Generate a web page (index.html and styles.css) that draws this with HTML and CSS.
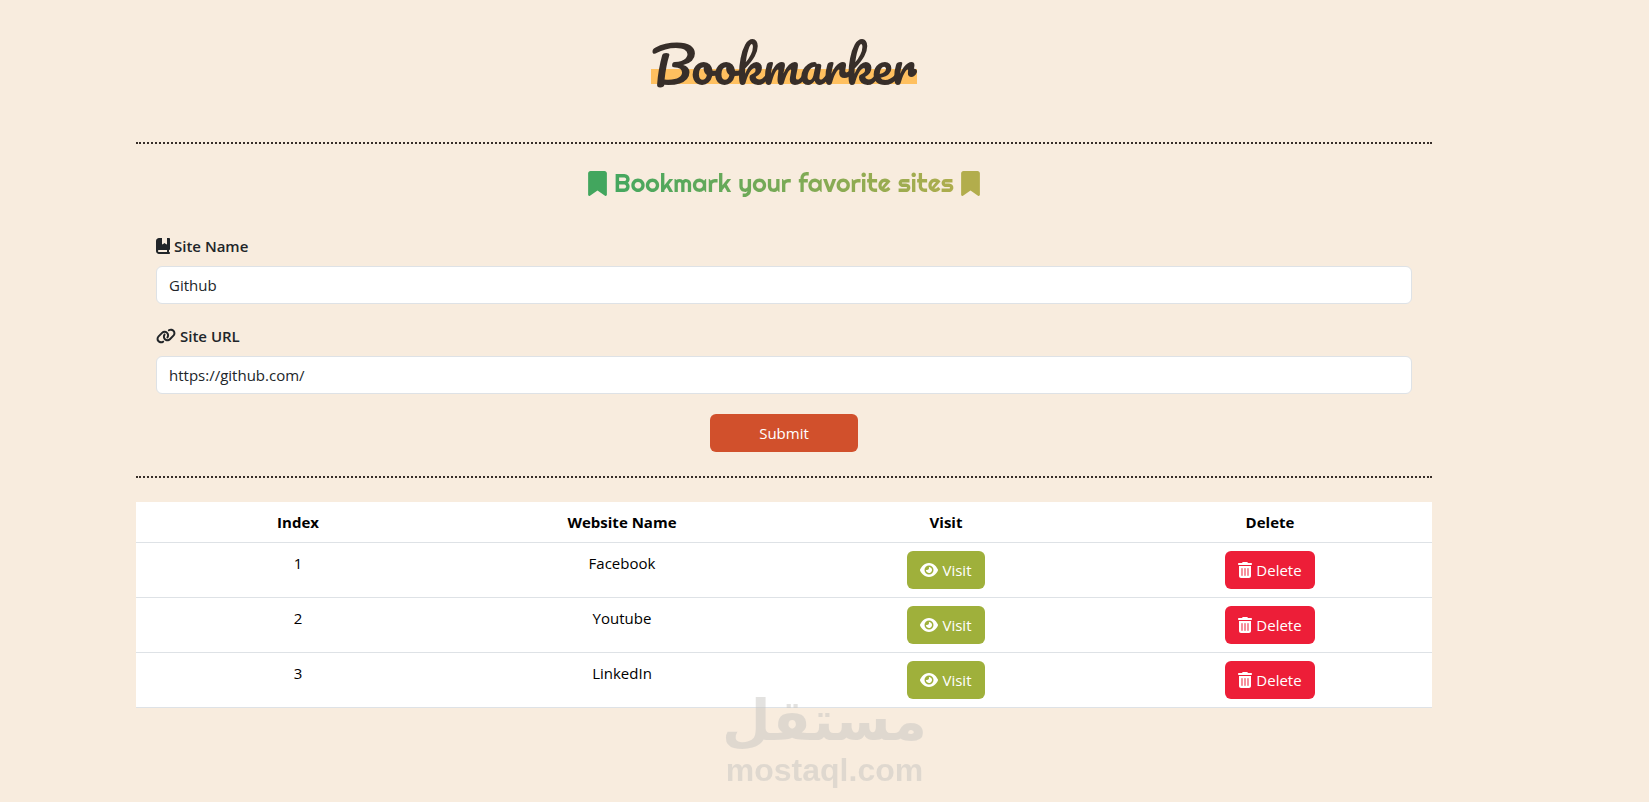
FILE: index.html
```html
<!DOCTYPE html>
<html lang="en">
<head>
<meta charset="utf-8">
<title>Bookmarker</title>
<link rel="stylesheet" href="styles.css">
</head>
<body>
<svg class="sprite" aria-hidden="true">
  <symbol id="bookmark" viewBox="0 0 384 512"><path d="M0 48V487.700C0 501.100 10.900 512 24.300 512c5 0 9.900-1.500 14-4.400L192 400 345.700 507.600c4.100 2.900 9 4.400 14 4.400c13.400 0 24.300-10.900 24.300-24.300V48c0-26.500-21.500-48-48-48H48C21.500 0 0 21.500 0 48z"/></symbol>
  <symbol id="book" viewBox="0 0 448 512"><path d="M0 96C0 43 43 0 96 0h96v190.700c0 13.400 15.500 20.900 26 12.500L272 160l54 43.200c10.500 8.400 26 .900 26-12.500V0h64c17.700 0 32 14.300 32 32v320c0 17.700-14.300 32-32 32v64c17.700 0 32 14.300 32 32s-14.300 32-32 32H96c-53 0-96-43-96-96V96zm64 320c0 17.700 14.300 32 32 32h256v-64H96c-17.700 0-32 14.300-32 32z"/></symbol>
  <symbol id="link" viewBox="0 0 640 512"><path d="M579.800 267.700c56.500-56.500 56.500-148 0-204.500c-50-50-128.800-56.500-186.300-15.400l-1.600 1.100c-14.400 10.300-17.700 30.300-7.400 44.600s30.300 17.700 44.600 7.400l1.600-1.100c32.100-22.900 76-19.300 103.800 8.600c31.500 31.500 31.500 82.500 0 114L422.300 334.800c-31.500 31.500-82.500 31.500-114 0c-27.900-27.900-31.500-71.800-8.600-103.800l1.100-1.600c10.300-14.400 6.900-34.400-7.400-44.600s-34.400-6.900-44.600 7.400l-1.100 1.600C206.500 251.200 213 330 263 380c56.500 56.500 148 56.500 204.500 0L579.800 267.700zM60.200 244.300c-56.500 56.500-56.500 148 0 204.500c50 50 128.800 56.500 186.300 15.400l1.600-1.100c14.400-10.300 17.700-30.300 7.400-44.600s-30.300-17.700-44.600-7.400l-1.600 1.100c-32.100 22.900-76 19.300-103.800-8.600C74 372 74 321 105.500 289.500L217.700 177.200c31.500-31.500 82.500-31.500 114 0c27.900 27.900 31.500 71.800 8.600 103.900l-1.100 1.600c-10.300 14.400-6.900 34.400 7.400 44.600s34.400 6.900 44.600-7.400l1.100-1.600C433.500 260.800 427 182 377 132c-56.500-56.500-148-56.500-204.500 0L60.200 244.300z"/></symbol>
  <symbol id="eye" viewBox="0 0 576 512"><path d="M288 32c-80.800 0-145.500 36.800-192.600 80.600C48.600 156 17.300 208 2.500 243.700c-3.300 7.900-3.300 16.700 0 24.600C17.300 304 48.600 356 95.400 399.400C142.500 443.200 207.200 480 288 480s145.500-36.800 192.600-80.600c46.800-43.500 78.100-95.400 93-131.100c3.300-7.900 3.300-16.700 0-24.600c-14.900-35.700-46.200-87.700-93-131.100C433.500 68.800 368.800 32 288 32zM144 256a144 144 0 1 1 288 0 144 144 0 1 1 -288 0zm144-64c0 35.300-28.700 64-64 64c-7.100 0-13.900-1.200-20.300-3.300c-5.500-1.800-11.900 1.600-11.700 7.400c.300 6.900 1.300 13.800 3.200 20.700c13.700 51.200 66.400 81.600 117.600 67.900s81.600-66.400 67.900-117.600c-11.100-41.500-47.800-69.400-88.600-71.100c-5.800-.200-9.200 6.100-7.400 11.700c2.100 6.400 3.300 13.200 3.300 20.300z"/></symbol>
  <symbol id="trash" viewBox="0 0 448 512"><path d="M135.200 17.700C140.600 6.800 151.700 0 163.800 0H284.200c12.100 0 23.200 6.800 28.600 17.700L320 32h96c17.700 0 32 14.300 32 32s-14.300 32-32 32H32C14.300 96 0 81.700 0 64S14.300 32 32 32h96l7.200-14.300zM32 128H416V448c0 35.300-28.700 64-64 64H96c-35.300 0-64-28.700-64-64V128zm96 64c-8.800 0-16 7.200-16 16V432c0 8.800 7.200 16 16 16s16-7.200 16-16V208c0-8.800-7.200-16-16-16zm96 0c-8.800 0-16 7.200-16 16V432c0 8.800 7.200 16 16 16s16-7.200 16-16V208c0-8.800-7.200-16-16-16zm96 0c-8.800 0-16 7.200-16 16V432c0 8.800 7.200 16 16 16s16-7.200 16-16V208c0-8.800-7.200-16-16-16z"/></symbol>
</svg>
<main class="container">
  <header class="header"><h1 class="title">Bookmarker</h1></header>
  <section class="panel">
    <h2 class="subtitle">
      <svg class="mark mark-start" aria-hidden="true"><use href="#bookmark"/></svg>
      <span class="subtitle-text">Bookmark your favorite sites</span>
      <svg class="mark mark-end" aria-hidden="true"><use href="#bookmark"/></svg>
    </h2>
    <form class="form">
      <div class="field">
        <label class="label" for="site-name"><svg class="icon icon-narrow" aria-hidden="true"><use href="#book"/></svg>Site Name</label>
        <input class="input" id="site-name" type="text" value="Github">
      </div>
      <div class="field">
        <label class="label" for="site-url"><svg class="icon icon-wide" aria-hidden="true"><use href="#link"/></svg>Site URL</label>
        <input class="input" id="site-url" type="text" value="https://github.com/">
      </div>
      <button class="btn btn-submit" type="button">Submit</button>
    </form>
  </section>
  <table class="table">
    <thead>
      <tr><th>Index</th><th>Website Name</th><th>Visit</th><th>Delete</th></tr>
    </thead>
    <tbody>
      <tr>
        <td>1</td><td>Facebook</td>
        <td><button class="btn btn-visit" type="button"><svg class="icon icon-eye" aria-hidden="true"><use href="#eye"/></svg>Visit</button></td>
        <td><button class="btn btn-delete" type="button"><svg class="icon icon-narrow" aria-hidden="true"><use href="#trash"/></svg>Delete</button></td>
      </tr>
      <tr>
        <td>2</td><td>Youtube</td>
        <td><button class="btn btn-visit" type="button"><svg class="icon icon-eye" aria-hidden="true"><use href="#eye"/></svg>Visit</button></td>
        <td><button class="btn btn-delete" type="button"><svg class="icon icon-narrow" aria-hidden="true"><use href="#trash"/></svg>Delete</button></td>
      </tr>
      <tr>
        <td>3</td><td>LinkedIn</td>
        <td><button class="btn btn-visit" type="button"><svg class="icon icon-eye" aria-hidden="true"><use href="#eye"/></svg>Visit</button></td>
        <td><button class="btn btn-delete" type="button"><svg class="icon icon-narrow" aria-hidden="true"><use href="#trash"/></svg>Delete</button></td>
      </tr>
    </tbody>
  </table>
</main>
<div class="watermark">
  <span class="watermark-arabic" lang="ar" dir="rtl">مستقل</span>
  <span class="watermark-latin">mostaql.com</span>
</div>
</body>
</html>
```
FILE: styles.css
```css
* { box-sizing: border-box; }

body {
  margin: 0;
  padding-right: 81px;
  min-height: 100vh;
  background: #f8ecde;
  color: #212529;
  font: 15px/24px "Segoe UI", "Open Sans", "Noto Sans", sans-serif;
}

.sprite { display: none; }

.container {
  max-width: 1320px;
  margin: 0 auto;
  padding: 0 12px;
}

.header {
  display: flex;
  justify-content: center;
  padding: 24px 0 38px;
}

.title {
  margin: 0;
  color: #372e29;
  font: 400 50px/80px Pacifico, Lato, sans-serif;
  background: linear-gradient(#ffc05f, #ffc05f) 0 45px / 100% 15px no-repeat;
}

.panel {
  padding: 24px 20px;
  border-top: 2px dotted #372e29;
  border-bottom: 2px dotted #372e29;
}

.subtitle {
  display: flex;
  justify-content: center;
  align-items: center;
  gap: 7px;
  margin: 0 0 36px;
  font: 400 25px/30px Righteous, Lato, sans-serif;
}

.subtitle-text {
  background: linear-gradient(90deg, #44a75f, #aead4d);
  background-clip: text;
  color: transparent;
}

.mark { width: 19px; height: 25px; }
.mark-start { fill: #42a65e; }
.mark-end { fill: #b2ad4c; }

.form {
  display: flex;
  flex-direction: column;
  gap: 20px;
}

.label {
  display: flex;
  align-items: center;
  gap: 4px;
  margin-bottom: 8px;
  font-weight: 600;
}

.icon { height: 16px; fill: currentColor; }
.icon-narrow { width: 14px; }
.icon-eye { width: 18px; }
.icon-wide { width: 20px; }

.input {
  display: block;
  width: 100%;
  padding: 6px 12px;
  border: 1px solid #dee2e6;
  border-radius: 6px;
  background: #fff;
  color: #212529;
  font: inherit;
}

.btn {
  display: inline-flex;
  align-items: center;
  gap: 4px;
  padding: 7px 13px;
  border: 0;
  border-radius: 6px;
  color: #fff;
  font: inherit;
  vertical-align: top;
}

.btn-submit {
  align-self: center;
  padding: 7px 49px;
  background: #d1502c;
}

.btn-visit { background: #9fb03b; }
.btn-delete { background: #ed1e38; }

.table {
  width: 100%;
  margin-top: 24px;
  border-collapse: separate;
  border-spacing: 0;
  table-layout: fixed;
  background: #fff;
  color: #000;
  text-align: center;
}

.table th,
.table td {
  padding: 8px;
  border-bottom: 1px solid #dee2e6;
  vertical-align: top;
}

.watermark {
  position: absolute;
  top: 688px;
  left: 50%;
  display: flex;
  flex-direction: column;
  align-items: center;
  transform: translateX(-50%);
  color: #c8c6c2;
  opacity: 0.5;
  pointer-events: none;
}

.watermark-arabic { font: 700 56px/66px "DejaVu Sans", sans-serif; }
.watermark-latin { font: 700 32px/32px "Liberation Sans", Arial, sans-serif; }
```
